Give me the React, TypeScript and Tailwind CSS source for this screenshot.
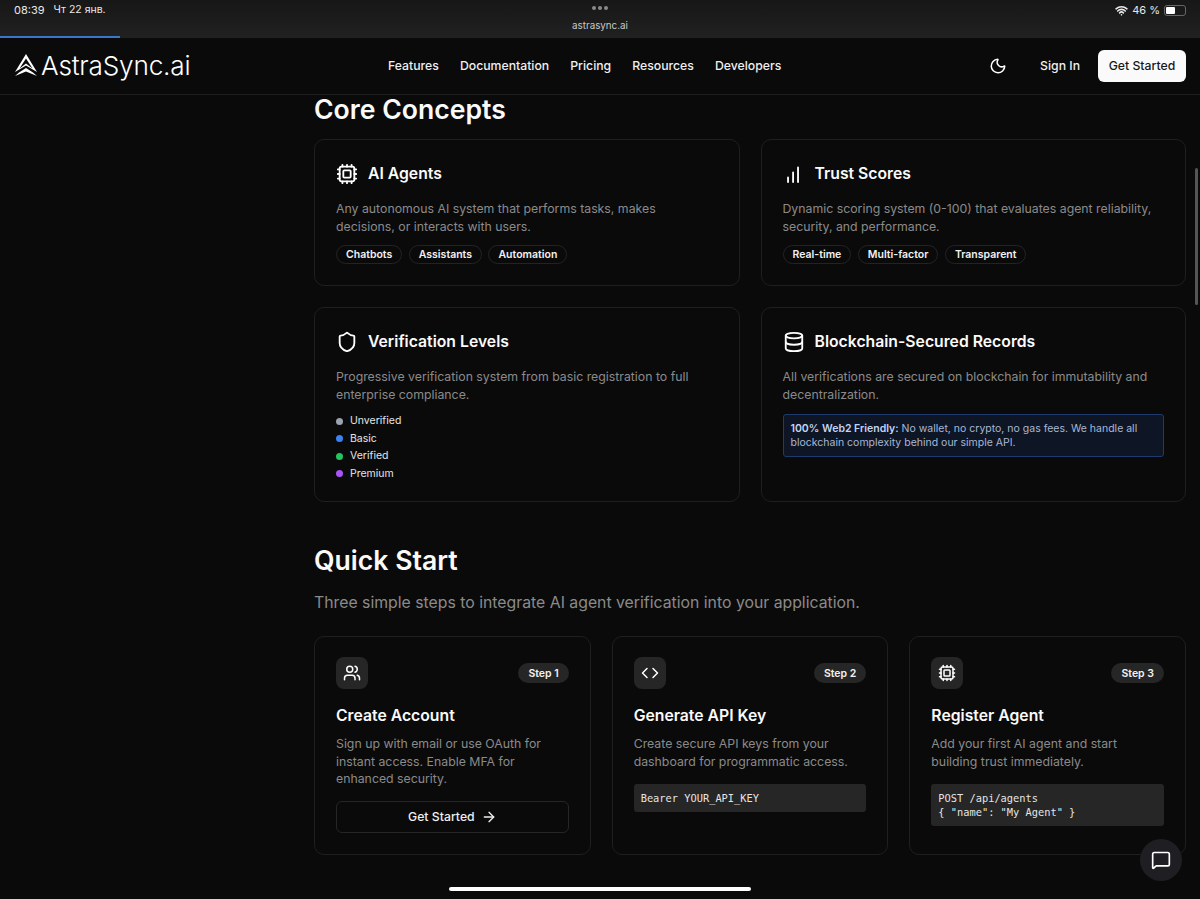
import { ArrowRight, Code, Cpu, Database, MessageSquare, Moon, Shield, Users, Wifi } from "lucide-react";

const font = { fontFamily: "Inter, 'Noto Sans', sans-serif" };

function Tag({ label }: { label: string }) {
  return (
    <span className="h-[19px] px-[9px] flex items-center rounded-full border border-[#232323] text-[10.5px] font-semibold text-[#f2f2f2]">
      {label}
    </span>
  );
}

function ConceptCard({ icon, title, text, children, h }: { icon: React.ReactNode; title: string; text: string; children: React.ReactNode; h: string }) {
  return (
    <div className={`${h} rounded-[10px] border border-[#1f1f1f] bg-[#0a0a0a] px-[21px] pt-[21px]`}>
      <div className="flex items-center gap-[10px] h-[25px]">
        <span className="w-[22px] h-[22px] flex items-center justify-center text-white">{icon}</span>
        <h3 className="text-[15.75px] font-semibold text-[#fafafa]">{title}</h3>
      </div>
      <p className="mt-[14px] whitespace-pre-line text-[12.3px] leading-[17.5px] text-[#8a8a8a]">{text}</p>
      {children}
    </div>
  );
}

function StepCard({ icon, step, title, text, children }: { icon: React.ReactNode; step: string; title: string; text: string; children: React.ReactNode }) {
  return (
    <div className="h-[219px] rounded-[10px] border border-[#1f1f1f] bg-[#0a0a0a] px-[21px] pt-[20px]">
      <div className="flex items-center justify-between">
        <span className="w-8 h-8 rounded-lg bg-[#262626] flex items-center justify-center text-white">{icon}</span>
        <span className="h-5 px-[10px] pt-[1px] rounded-full bg-[#262626] flex items-center text-[10.5px] font-semibold text-[#f2f2f2]">{step}</span>
      </div>
      <h3 className="mt-[16px] text-[15.75px] leading-[21px] font-semibold text-[#fafafa]">{title}</h3>
      <p className="mt-[9px] text-[12.3px] leading-[17.5px] text-[#8a8a8a]">{text}</p>
      {children}
    </div>
  );
}

function CodeBlock({ lines }: { lines: string[] }) {
  return (
    <pre className="mt-[14px] rounded-[3px] bg-[#262626] px-[7px] py-[7px] text-[10.35px] leading-[14px] text-[#e5e5e5]" style={{ fontFamily: "'DejaVu Sans Mono', 'Liberation Mono', monospace" }}>
      {lines.join("\n")}
    </pre>
  );
}

const levels = [
  { name: "Unverified", dot: "bg-[#9ca3af]" },
  { name: "Basic", dot: "bg-[#3b82f6]" },
  { name: "Verified", dot: "bg-[#22c55e]" },
  { name: "Premium", dot: "bg-[#a855f7]" },
];

export default function App() {
  return (
    <div className="relative h-[899px] overflow-hidden bg-[#0a0a0a] text-white" style={font}>
      {/* tablet status bar */}
      <div className="relative h-[38px] bg-gradient-to-b from-[#171717] to-[#212121]">
        <div className="flex justify-between px-[14px] pt-[3px] text-[10.5px] leading-[14px] text-[#e8e8e8]">
          <div className="flex gap-[9px]">
            <span className="text-[11px]">08:39</span>
            <span>Чт 22 янв.</span>
          </div>
          <div className="flex items-center gap-[4px] h-[14px]">
            <Wifi size={13} strokeWidth={3} />
            <span className="text-[11px]">46 %</span>
            <span className="w-[22px] h-[11px] rounded-[3px] border border-[#666] p-[1px]">
              <span className="block w-[9px] h-full rounded-[1px] bg-white" />
            </span>
          </div>
        </div>
        <div className="absolute top-[6px] left-1/2 -translate-x-1/2 flex gap-[2px]">
          <span className="w-[4px] h-[4px] rounded-full bg-[#8a8a8a]" />
          <span className="w-[4px] h-[4px] rounded-full bg-[#8a8a8a]" />
          <span className="w-[4px] h-[4px] rounded-full bg-[#8a8a8a]" />
        </div>
        <div className="absolute top-[19px] inset-x-0 text-center text-[9.8px] leading-[14px] text-[#c8c8c8]">astrasync.ai</div>
        <div className="absolute left-0 bottom-0 w-[120px] h-[2px] bg-[#3b76c9]" />
      </div>

      {/* nav */}
      <header className="h-[57px] border-b border-[#1f1f1f] flex items-center px-[14px]">
        <div className="w-[176px] flex items-center gap-[3px]">
          <svg width="24" height="24" viewBox="0 0 24 24" fill="white" className="shrink-0 -mt-[1px]">
            <path d="M12 1 L23 19 L12 12.5 L1 19 Z M12 5.5 L5.5 15.5 L12 10.5 L18.5 15.5 Z" fillRule="evenodd" />
            <path d="M12 15 L19 19.5 L23 23 L12 18.5 L1 23 L5 19.5 Z" />
          </svg>
          <span className="text-[26.2px] font-light leading-none whitespace-nowrap tracking-[-0.2px]">AstraSync.ai</span>
        </div>
        <nav className="ml-[198px] pt-[1px] flex gap-[21px] text-[12.25px] font-medium text-[#f0f0f0]">
          <span>Features</span>
          <span>Documentation</span>
          <span>Pricing</span>
          <span>Resources</span>
          <span>Developers</span>
        </nav>
        <div className="ml-auto flex items-center">
          <Moon size={18} strokeWidth={2} className="mr-[33px]" />
          <span className="mr-[18px] pt-[1px] text-[12.25px] font-medium text-[#f0f0f0]">Sign In</span>
          <span className="h-[32px] w-[88px] pt-[1px] rounded-md bg-[#fafafa] flex items-center justify-center text-[12.25px] font-medium text-[#171717]">Get Started</span>
        </div>
      </header>

      <div className="flex">
        <aside className="w-[314px] shrink-0" />
        <main className="w-[872px]">
          <h2 className="mt-[-3px] text-[26.6px] leading-[34px] font-semibold text-[#fafafa]">Core Concepts</h2>
          <div className="mt-[13px] grid grid-cols-2 gap-[21px]">
            <ConceptCard h="h-[147px]" icon={<Cpu size={22} />} title="AI Agents" text={"Any autonomous AI system that performs tasks, makes\ndecisions, or interacts with users."}>
              <div className="mt-[10px] flex gap-[6.5px]">
                <Tag label="Chatbots" />
                <Tag label="Assistants" />
                <Tag label="Automation" />
              </div>
            </ConceptCard>
            <ConceptCard
              h="h-[147px]"
              icon={
                <svg width="22" height="22" viewBox="0 0 24 24" fill="none" stroke="currentColor" strokeWidth="2" strokeLinecap="round">
                  <path d="M5.5 20.7v-4.9M11 20.7V10.4M16.4 20.7V4.9" />
                </svg>
              }
              title="Trust Scores"
              text="Dynamic scoring system (0-100) that evaluates agent reliability, security, and performance."
            >
              <div className="mt-[10px] flex gap-[6.5px]">
                <Tag label="Real-time" />
                <Tag label="Multi-factor" />
                <Tag label="Transparent" />
              </div>
            </ConceptCard>
            <ConceptCard h="h-[195px]" icon={<Shield size={22} />} title="Verification Levels" text="Progressive verification system from basic registration to full enterprise compliance.">
              <ul className="mt-[9.5px]">
                {levels.map((l) => (
                  <li key={l.name} className="h-[17.5px] flex items-center gap-[7px] text-[10.5px] text-[#e5e5e5]">
                    <span className={`w-[7px] h-[7px] rounded-full ${l.dot}`} />
                    {l.name}
                  </li>
                ))}
              </ul>
            </ConceptCard>
            <ConceptCard h="h-[195px]" icon={<Database size={22} />} title="Blockchain-Secured Records" text="All verifications are secured on blockchain for immutability and decentralization.">
              <div className="mt-[11px] rounded-[3px] border border-[#1e3a6e] bg-[#0e1525] px-[7px] py-[6.5px] text-[10.5px] leading-[14px] text-[#a9b8d4]">
                <strong className="font-semibold text-[#c3d4f2]">100% Web2 Friendly:</strong> No wallet, no crypto, no gas fees. We handle all blockchain complexity behind our simple API.
              </div>
            </ConceptCard>
          </div>

          <h2 className="mt-[41px] text-[26.6px] leading-[34px] font-semibold text-[#fafafa]">Quick Start</h2>
          <p className="mt-[15px] text-[15.8px] leading-[22px] text-[#8a8a8a]">Three simple steps to integrate AI agent verification into your application.</p>

          <div className="mt-[22px] grid grid-cols-3 gap-[21px]">
            <StepCard icon={<Users size={18} />} step="Step 1" title="Create Account" text="Sign up with email or use OAuth for instant access. Enable MFA for enhanced security.">
              <div className="mt-[13px] h-[32px] pt-[1px] rounded-md border border-[#262626] flex items-center justify-center gap-[6px] text-[12.25px] font-medium text-[#f0f0f0]">
                Get Started
                <ArrowRight size={16} />
              </div>
            </StepCard>
            <StepCard icon={<Code size={18} />} step="Step 2" title="Generate API Key" text="Create secure API keys from your dashboard for programmatic access.">
              <CodeBlock lines={["Bearer YOUR_API_KEY"]} />
            </StepCard>
            <StepCard icon={<Cpu size={18} />} step="Step 3" title="Register Agent" text="Add your first AI agent and start building trust immediately.">
              <CodeBlock lines={["POST /api/agents", '{ "name": "My Agent" }']} />
            </StepCard>
          </div>
        </main>
      </div>

      {/* overlays */}
      <div className="absolute left-[1195px] top-[168px] w-[3px] h-[137px] rounded-full bg-[#555]" />
      <div className="absolute left-[1140px] top-[839px] w-[42px] h-[42px] rounded-full bg-[#1f1f23] flex items-center justify-center text-white">
        <MessageSquare size={20} />
      </div>
      <div className="absolute left-[449px] top-[887px] w-[302px] h-[4px] rounded-full bg-white" />
    </div>
  );
}
